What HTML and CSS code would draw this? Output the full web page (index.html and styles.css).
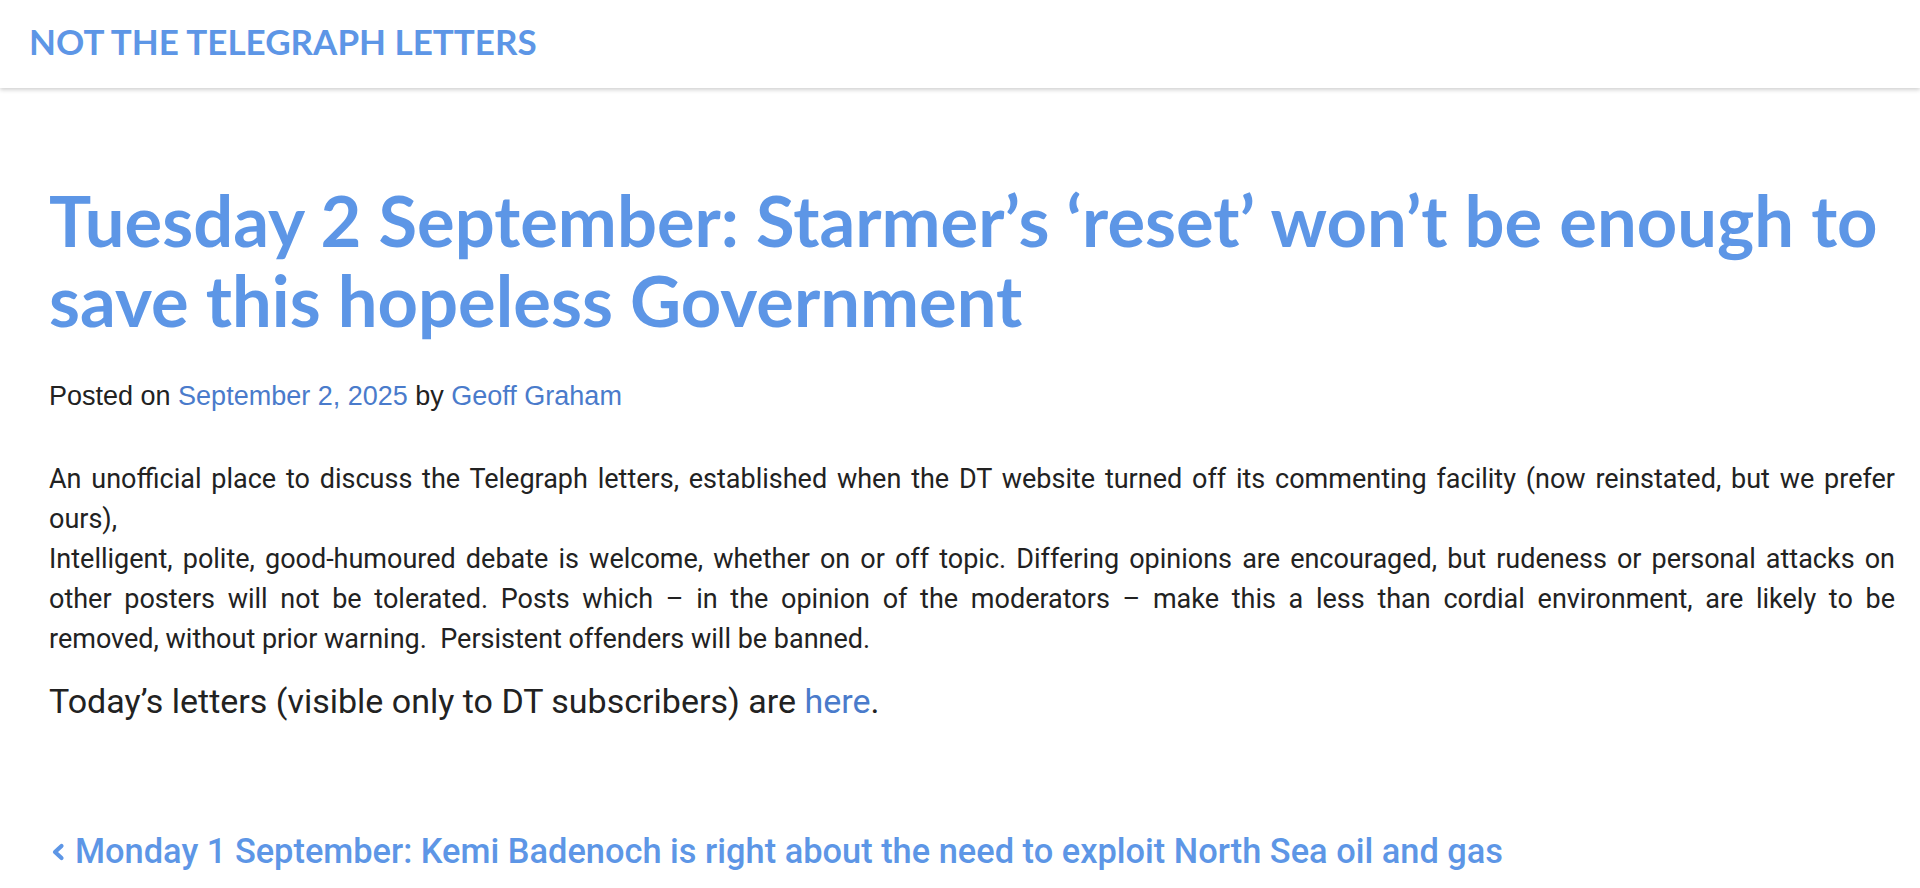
FILE: index.html
```html
<!DOCTYPE html>
<html lang="en">
  <head>
    <meta charset="UTF-8" />
    <meta name="viewport" content="width=device-width, initial-scale=1.0" />
    <title>Not the Telegraph Letters</title>
    <link rel="stylesheet" href="styles.css">
  </head>
  <body>
    <header class="site-header">
      <a class="brand" href="#">Not the Telegraph Letters</a>
    </header>

    <main class="content">
      <article class="post">
        <h1 class="post-title">Tuesday 2 September: Starmer’s ‘reset’ won’t be enough to save this hopeless Government</h1>

        <div class="post-meta">
          Posted on <a href="#">September 2, 2025</a> by <a href="#">Geoff Graham</a>
        </div>

        <div class="post-body">
          <p class="intro">
            An unofficial place to discuss the Telegraph letters, established when the DT website turned off its commenting facility (now reinstated, but we prefer ours),<br>
            Intelligent, polite, good-humoured debate is welcome, whether on or off topic. Differing opinions are encouraged, but rudeness or personal attacks on other posters will not be tolerated. Posts which – in the opinion of the moderators – make this a less than cordial environment, are likely to be <span class="nowrap">removed, without</span> prior warning.&nbsp; Persistent offenders will be banned.
          </p>
          <p class="today">Today’s letters (visible only to DT subscribers) are <a href="#">here</a>.</p>
        </div>
      </article>

      <nav class="post-nav">
        <a href="#" class="prev">
          <svg class="chevron" viewBox="0 0 14 18" width="14" height="18" aria-hidden="true">
            <polyline points="10.5,3 4,9 10.5,15" fill="none" stroke="currentColor" stroke-width="4.2" stroke-linecap="round" stroke-linejoin="round" />
          </svg>
          Monday 1 September: Kemi Badenoch is right about the need to exploit North Sea oil and gas
        </a>
      </nav>
    </main>
  </body>
</html>
```

FILE: styles.css
```css
/* General */
body {
  margin: 0;
  padding: 0;
  background: #ffffff;
  color: #222;
  font-family: Roboto, "Liberation Sans", sans-serif;
}

a {
  text-decoration: none;
}

/* Top bar */
.site-header {
  height: 88px;
  display: flex;
  align-items: center;
  padding: 0 29px;
  background: #fff;
  box-shadow: 0 2px 4px rgba(0, 0, 0, 0.18);
}

.brand {
  font-family: Lato, sans-serif;
  font-weight: 700;
  font-size: 35px;
  text-transform: uppercase;
  color: #5d96e6;
  padding-bottom: 6px;
}

/* Content */
.content {
  padding: 92px 25px 0 49px;
}

.post-title {
  margin: 0;
  font-family: Lato, sans-serif;
  font-weight: 700;
  font-size: 70.5px;
  line-height: 80px;
  color: #5d96e6;
}

.post-meta {
  margin-top: 41px;
  font-family: "Liberation Sans", Arial, sans-serif;
  font-size: 27px;
  line-height: 31px;
  color: #222;
}

.post-meta a {
  color: #4a7bcb;
}

.post-body p {
  margin: 0;
}

.intro {
  margin-top: 47px !important;
  font-size: 27px;
  line-height: 40px;
  text-align: justify;
}

.nowrap {
  white-space: nowrap;
}

.today {
  margin-top: 20px !important;
  font-size: 34px;
  line-height: 45px;
}

.today a {
  color: #4a7bcb;
}

/* Previous post link */
.post-nav {
  margin-top: 105px;
}

.prev {
  display: inline-flex;
  align-items: center;
  gap: 10px;
  font-size: 34.4px;
  line-height: 45px;
  font-weight: 500;
  color: #5d96e6;
}

.chevron {
  margin-left: 2px;
}
```
